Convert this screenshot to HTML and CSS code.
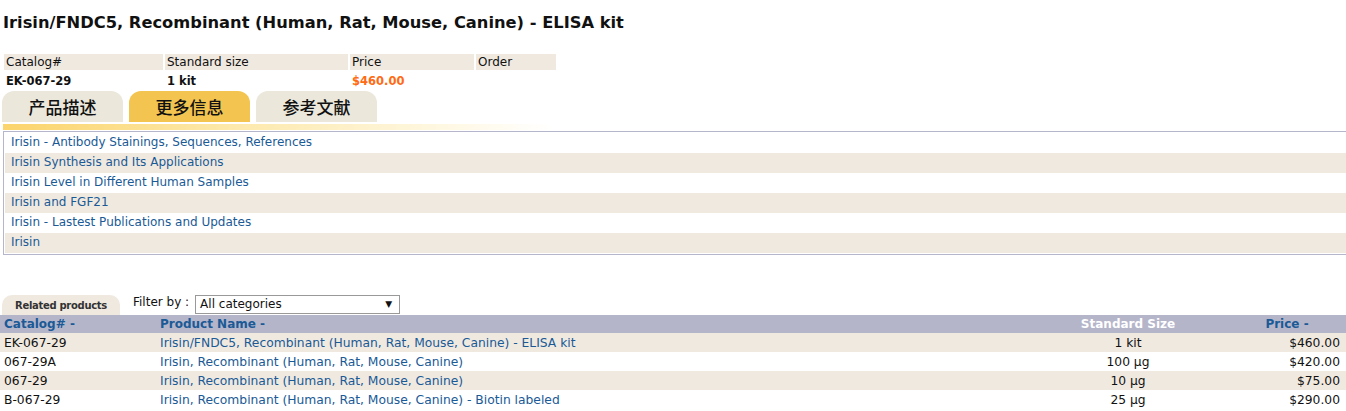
FILE: index.html
```html
<!DOCTYPE html>
<html lang="zh">
<head>
  <meta charset="UTF-8">
  <title>Irisin/FNDC5 ELISA kit</title>
  <link rel="stylesheet" href="styles.css">
</head>
<body>

  <h1 class="title">Irisin/FNDC5, Recombinant (Human, Rat, Mouse, Canine) - ELISA kit</h1>

  <table class="spec">
    <tr class="spec-head">
      <td class="c-cat">Catalog#</td>
      <td class="c-size">Standard size</td>
      <td class="c-price">Price</td>
      <td class="c-order">Order</td>
    </tr>
    <tr class="spec-row">
      <td>EK-067-29</td>
      <td>1 kit</td>
      <td class="price">$460.00</td>
      <td></td>
    </tr>
  </table>

  <div class="tabs">
    <a href="#" class="tab">产品描述</a>
    <a href="#" class="tab active">更多信息</a>
    <a href="#" class="tab">参考文献</a>
  </div>
  <div class="tab-line"></div>

  <ul class="info-list">
    <li><a href="#">Irisin - Antibody Stainings, Sequences, References</a></li>
    <li><a href="#">Irisin Synthesis and Its Applications</a></li>
    <li><a href="#">Irisin Level in Different Human Samples</a></li>
    <li><a href="#">Irisin and FGF21</a></li>
    <li><a href="#">Irisin - Lastest Publications and Updates</a></li>
    <li><a href="#">Irisin</a></li>
  </ul>

  <div class="related-bar">
    <span class="related-tab">Related products</span>
    <label class="filter">Filter by :
      <span class="select">All categories <span class="arrow">&#9660;</span></span>
    </label>
  </div>

  <table class="related">
    <thead>
      <tr>
        <th class="r-cat"><a href="#">Catalog# -</a></th>
        <th class="r-name"><a href="#">Product Name -</a></th>
        <th class="r-size">Standard Size</th>
        <th class="r-price"><a href="#">Price -</a></th>
      </tr>
    </thead>
    <tbody>
      <tr>
        <td>EK-067-29</td>
        <td><a href="#">Irisin/FNDC5, Recombinant (Human, Rat, Mouse, Canine) - ELISA kit</a></td>
        <td class="r-size">1 kit</td>
        <td class="r-price">$460.00</td>
      </tr>
      <tr>
        <td>067-29A</td>
        <td><a href="#">Irisin, Recombinant (Human, Rat, Mouse, Canine)</a></td>
        <td class="r-size">100 &micro;g</td>
        <td class="r-price">$420.00</td>
      </tr>
      <tr>
        <td>067-29</td>
        <td><a href="#">Irisin, Recombinant (Human, Rat, Mouse, Canine)</a></td>
        <td class="r-size">10 &micro;g</td>
        <td class="r-price">$75.00</td>
      </tr>
      <tr>
        <td>B-067-29</td>
        <td><a href="#">Irisin, Recombinant (Human, Rat, Mouse, Canine) - Biotin labeled</a></td>
        <td class="r-size">25 &micro;g</td>
        <td class="r-price">$290.00</td>
      </tr>
    </tbody>
  </table>

</body>
</html>
```

FILE: styles.css
```css
body {
  font-family: "DejaVu Sans", Verdana, sans-serif;
  font-size: 12px;
  color: #111;
  background: #ffffff;
  margin: 0;
  padding: 0 0 0 2px;
}

a {
  color: #1a5a96;
  text-decoration: none;
}

.title {
  font-size: 16.3px;
  font-weight: bold;
  margin: 13px 0 19px 1px;
  line-height: 20px;
  color: #111;
}

/* spec table */
.spec {
  border-collapse: separate;
  border-spacing: 2px;
  font-size: 12px;
}

.spec td {
  padding: 0 2px;
  height: 16px;
  line-height: 16px;
}

.spec-head td {
  background-color: #f0e9e0;
}

.c-cat { width: 155px; }
.c-size { width: 179px; }
.c-price { width: 120px; }
.c-order { width: 76px; }

.spec-row td {
  font-weight: bold;
  font-size: 11.5px;
  height: 17px;
}

.spec-row .price {
  color: #ff6a13;
}

/* tabs */
.tabs {
  display: flex;
  gap: 6px;
  margin-top: 0;
}

.tab {
  width: 121px;
  height: 31px;
  line-height: 31px;
  text-align: center;
  font-family: "Noto Sans CJK SC", sans-serif;
  font-size: 17px;
  font-weight: 500;
  color: #111;
  background-color: #ebe7db;
  border-radius: 12px 12px 0 0;
}

.tab.active {
  background-color: #f3c550;
}

.tab-line {
  height: 6px;
  margin: 2px 0 0 1px;
  background: linear-gradient(to right, #fbd46c, #fde8a8 40%, #ffffff 100%);
  width: 550px;
}

.info-list {
  list-style: none;
  margin: 1px 0 0 1px;
  padding: 1px 0 1px 1px;
  border: 1px solid #b5b5cb;
  border-right: none;
}

.info-list li {
  height: 20px;
  line-height: 19px;
  padding-left: 6px;
}

.info-list li:nth-child(even) {
  background-color: #f0e9e0;
}

/* related products */
.related-bar {
  display: flex;
  align-items: flex-end;
  margin-top: 40px;
  height: 20px;
}

.related-tab {
  width: 118px;
  height: 20px;
  line-height: 21px;
  text-align: center;
  font-size: 10px;
  letter-spacing: -0.3px;
  font-weight: bold;
  color: #333;
  background-color: #f0e9e0;
  border-radius: 10px 10px 0 0;
}

.filter {
  display: flex;
  align-items: flex-start;
  margin-left: 13px;
  align-self: flex-start;
  font-size: 12px;
  line-height: 15px;
  color: #111;
}

.select {
  display: flex;
  justify-content: space-between;
  width: 192px;
  height: 17px;
  margin-left: 6px;
  padding: 0 7px 0 4px;
  border: 1px solid #999;
  line-height: 17px;
}

.arrow {
  font-size: 9px;
}

.related {
  border-collapse: collapse;
  margin-left: -2px;
  width: calc(100% + 2px);
  font-size: 12.3px;
}

.related th,
.related td {
  height: 19px;
  padding: 0 4px;
  text-align: left;
  white-space: nowrap;
}

.related th {
  background-color: #b5b5ca;
  font-weight: bold;
  font-size: 12px;
  height: 18px;
}

.related th a {
  color: #1a5a96;
}

.related tbody tr:nth-child(odd) {
  background-color: #f0e9e0;
}

.r-cat { width: 148px; }

.related .r-size {
  width: 196px;
  text-align: center;
}

.related th.r-size {
  color: #ffffff;
}

.related .r-price {
  width: 106px;
  text-align: right;
  padding-right: 6px;
}

.related th.r-price {
  text-align: center;
}
```
